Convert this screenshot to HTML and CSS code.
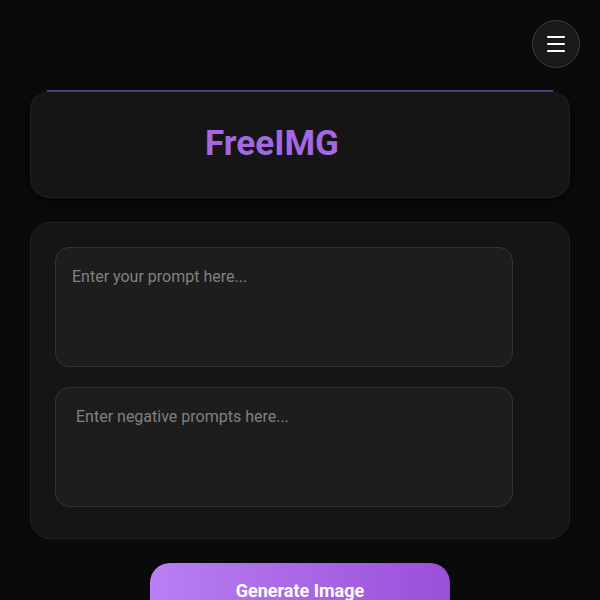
FILE: index.html
```html
<!DOCTYPE html>
<html lang="en">
<head>
  <meta charset="UTF-8">
  <meta name="viewport" content="width=device-width, initial-scale=1.0">
  <title>FreeIMG</title>
  <link rel="stylesheet" href="styles.css">
</head>
<body>
  <div class="top-bar">
    <button class="menu-btn" aria-label="Menu">
      <span></span>
      <span></span>
      <span></span>
    </button>
  </div>

  <div class="container">
    <div class="header-card">
      <h1>FreeIMG</h1>
    </div>

    <div class="form-card">
      <textarea class="prompt" placeholder="Enter your prompt here..."></textarea>
      <textarea class="negative" placeholder="Enter negative prompts here..."></textarea>
    </div>

    <button class="generate-btn">Generate Image</button>
  </div>
</body>
</html>
```

FILE: styles.css
```css
body {
  font-family: Roboto, "Liberation Sans", sans-serif;
  margin: 0;
  padding: 0;
  background: #0a0a0a;
  color: #fff;
}

.top-bar {
  display: flex;
  justify-content: flex-end;
  padding: 20px 20px 0;
}

.menu-btn {
  width: 48px;
  height: 48px;
  border-radius: 50%;
  border: 1px solid #3a3a3a;
  background: #1a1a1a;
  display: flex;
  flex-direction: column;
  justify-content: center;
  align-items: center;
  gap: 5px;
  padding: 0;
  cursor: pointer;
}

.menu-btn span {
  display: block;
  width: 18px;
  height: 2px;
  background: #fff;
  border-radius: 1px;
}

.container {
  padding: 22px 30px 0;
  display: flex;
  flex-direction: column;
}

.header-card {
  position: relative;
  background: #151515;
  border: 1px solid #222;
  border-top-color: transparent;
  border-radius: 20px;
  padding: 32px 56px 32px 0;
  box-shadow: 0 4px 16px rgba(0, 0, 0, 0.4);
}

/* thin purple line along the top edge */
.header-card::before {
  content: '';
  position: absolute;
  top: -1px;
  left: 16px;
  right: 16px;
  height: 2px;
  background: linear-gradient(#6b4a92, #3a2a4e);
}

h1 {
  margin: 0;
  font-size: 35px;
  line-height: 42px;
  font-weight: 700;
  text-align: center;
  color: #a368e2;
}

.form-card {
  margin-top: 24px;
  background: #151515;
  border: 1px solid #222;
  border-radius: 20px;
  padding: 24px 24px 31px;
  display: flex;
  flex-direction: column;
  gap: 20px;
}

textarea {
  width: 458px;
  height: 120px;
  box-sizing: border-box;
  background: #1d1d1d;
  border: 1px solid #333;
  border-radius: 14px;
  color: #ddd;
  font-family: inherit;
  font-size: 16px;
  line-height: 24px;
  resize: none;
  outline: none;
}

textarea::placeholder {
  color: #808080;
}

.prompt {
  padding: 17px 16px 16px;
}

.negative {
  padding: 17px 20px 16px;
}

.generate-btn {
  align-self: center;
  margin-top: 24px;
  width: 300px;
  padding: 16px;
  border: none;
  border-radius: 20px;
  background: linear-gradient(90deg, #b97ff3, #9a4fd9);
  color: #fff;
  font-family: inherit;
  font-size: 18px;
  font-weight: 700;
  line-height: 24px;
  cursor: pointer;
}
```
